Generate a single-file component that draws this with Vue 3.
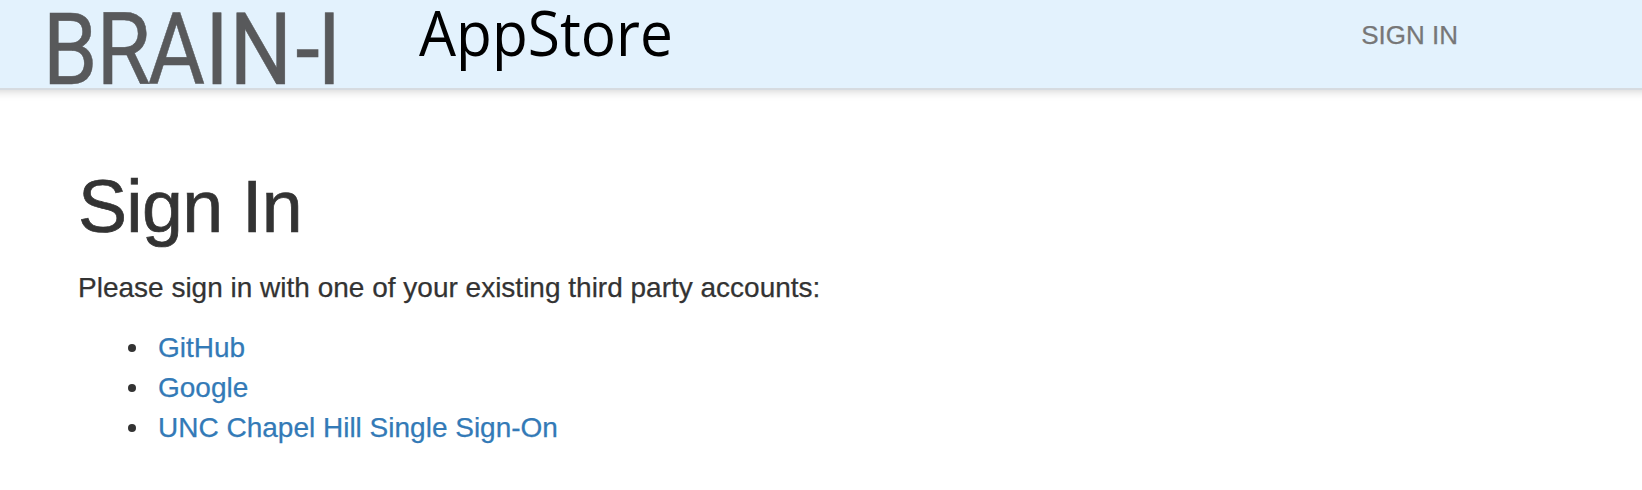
<script setup>
const providers = ['GitHub', 'Google', 'UNC Chapel Hill Single Sign-On']
</script>

<template>
  <div class="page">
    <header class="navbar">
      <svg class="brand" width="700" height="88" viewBox="0 0 700 88">
        <text class="logo" transform="scale(.87 1)" x="49 110.8 169.8 235.6 263.8 339.8 364.8" y="83.5">BRAIN-I</text>
        <text class="store" x="419" y="56" textLength="254" lengthAdjust="spacingAndGlyphs">AppStore</text>
      </svg>
      <a class="signin">SIGN IN</a>
    </header>
    <main class="content">
      <h1>Sign In</h1>
      <p>Please sign in with one of your existing third party accounts:</p>
      <ul>
        <li v-for="name in providers" :key="name"><i class="bullet"></i><a>{{ name }}</a></li>
      </ul>
    </main>
  </div>
</template>

<style scoped>
.page {
  height: 490px;
  overflow: hidden;
  background: #fff;
  color: #333;
  font: 28px/40px "Liberation Sans", Arial, sans-serif;
  -webkit-text-stroke: 0.25px currentColor;
}
.navbar {
  display: flex;
  justify-content: space-between;
  box-sizing: border-box;
  height: 90px;
  margin: 0 -20px;
  padding: 0 204px 0 20px;
  background: #e3f2fd;
  border-bottom: 2px solid #d6dbe0;
  box-shadow: 0 0 10px rgba(0, 0, 0, 0.22);
}
.brand { display: block; overflow: visible; -webkit-text-stroke: 0; }
.logo { font: 101px Roboto, sans-serif; fill: #58595b; stroke: #58595b; stroke-width: 0.5px; }
.store { font: 61.5px "Open Sans", sans-serif; fill: #000; }
.navbar .signin { padding-top: 16px; font-size: 26px; line-height: 38px; color: #777; }
.content { padding: 77px 78px 0; }
h1 {
  margin: 0 0 22px;
  font-size: 73.5px;
  font-weight: 400;
  line-height: 79px;
  letter-spacing: -0.7px;
  -webkit-text-stroke-width: 0.7px;
}
p { margin: 0 0 20px; }
ul { margin: 0; padding-left: 50px; list-style: none; }
li { display: flex; align-items: center; }
.bullet { width: 8px; height: 8px; margin-right: 22px; border-radius: 50%; background: #333; }
a { color: #337ab7; }
</style>
